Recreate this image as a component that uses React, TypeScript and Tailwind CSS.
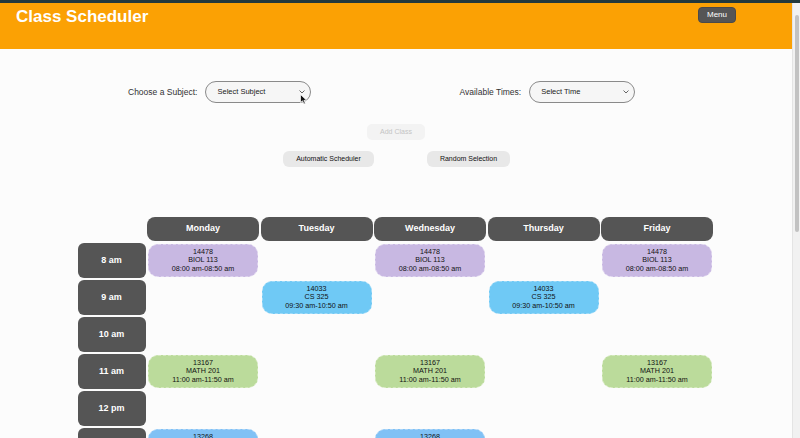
import React from "react";

const times = ["8 am", "9 am", "10 am", "11 am", "12 pm", "1 pm"];
const days = ["Monday", "Tuesday", "Wednesday", "Thursday", "Friday"];

type Block = { crn: string; course: string; time: string; color: string };

const biol: Block = { crn: "14478", course: "BIOL 113", time: "08:00 am-08:50 am", color: "bg-[#c8b8e2] border-[#ddd2ee]" };
const cs: Block = { crn: "14033", course: "CS 325", time: "09:30 am-10:50 am", color: "bg-[#6fc9f5] border-[#9fdaf8]" };
const math: Block = { crn: "13167", course: "MATH 201", time: "11:00 am-11:50 am", color: "bg-[#bbdb9b] border-[#d4e9bd]" };
const late: Block = { crn: "13268", course: "CS 215", time: "01:00 pm-01:50 pm", color: "bg-[#80c1f5] border-[#a9d4f8]" };

// rows x days
const schedule: (Block | null)[][] = [
  [biol, null, biol, null, biol],
  [null, cs, null, cs, null],
  [null, null, null, null, null],
  [math, null, math, null, math],
  [null, null, null, null, null],
  [late, null, late, null, null],
];

function SelectBox({ text }: { text: string }) {
  return (
    <div className="w-[106px] h-[22px] rounded-full border border-[#8a8a8a] bg-[#f6f6f6] flex items-center justify-between pl-[11px] pr-[5px]">
      <span className="text-[7.5px] text-[#222]">{text}</span>
      <svg width="6" height="4" viewBox="0 0 6 4" className="text-[#555]">
        <path d="M0.5 0.5 L3 3 L5.5 0.5" fill="none" stroke="currentColor" strokeWidth="0.9" />
      </svg>
    </div>
  );
}

export default function App() {
  return (
    <div
      className="w-[800px] h-[438px] overflow-hidden bg-[#fcfcfc] flex flex-col"
      style={{ fontFamily: '"Liberation Sans", Arial, sans-serif' }}
    >
      <div className="h-[3px] bg-[#22393d] shrink-0" />
      <div className="flex flex-1 min-h-0">
        <div className="w-[792px] flex flex-col">
          {/* Header */}
          <div className="h-[46px] bg-[#fba104] flex justify-between items-start pl-[16px] pr-[56px] shrink-0">
            <h1 className="text-[17px] font-bold text-white mt-[3px] leading-[22px]">Class Scheduler</h1>
            <button className="mt-[4px] w-[38px] h-[16px] rounded-[4px] bg-[#555] border border-[#4a4a4a] text-white text-[8px] leading-none">
              Menu
            </button>
          </div>

          {/* Pickers */}
          <div className="flex items-center mt-[32px] pl-[128px] relative">
            <div className="flex items-center gap-[8px]">
              <span className="text-[8.5px] text-[#333]">Choose a Subject:</span>
              <SelectBox text="Select Subject" />
            </div>
            <div className="flex items-center gap-[8px] ml-[148px]">
              <span className="text-[8.5px] text-[#333]">Available Times:</span>
              <SelectBox text="Select Time" />
            </div>
            {/* mouse cursor */}
            <svg width="8" height="11" viewBox="0 0 8 11" className="absolute left-[300px] top-[13px]">
              <path d="M0.5 0.5 L0.5 8.5 L2.5 6.8 L4 10 L5.3 9.4 L3.9 6.3 L6.6 6.3 Z" fill="#111" stroke="#fff" strokeWidth="0.7" />
            </svg>
          </div>

          {/* Actions */}
          <div className="flex justify-center mt-[21px]">
            <button disabled className="w-[58px] h-[16px] rounded-[5px] bg-[#f3f3f3] text-[#c4c4c4] text-[7px]">
              Add Class
            </button>
          </div>
          <div className="flex justify-center gap-[53px] mt-[11px] pl-[1px]">
            <button className="w-[91px] h-[16px] rounded-[6px] bg-[#e8e8e8] text-[#111] text-[7px]">
              Automatic Scheduler
            </button>
            <button className="w-[83px] h-[16px] rounded-[6px] bg-[#e8e8e8] text-[#111] text-[7px]">
              Random Selection
            </button>
          </div>

          {/* Calendar */}
          <div className="flex justify-center mt-[50px] pr-[1.5px]">
            <div className="grid grid-cols-[68px_repeat(5,112px)] gap-x-[1.5px] gap-y-[2px] auto-rows-[35px] grid-rows-[24px]">
              <div />
              {days.map((d) => (
                <div
                  key={d}
                  className="bg-[#555] rounded-[8px] flex items-center justify-center text-white text-[9px] font-bold"
                >
                  {d}
                </div>
              ))}
              {times.map((t, r) => (
                <React.Fragment key={t}>
                  <div className="bg-[#555] rounded-[6px] flex items-center justify-center text-white text-[9px] font-bold">
                    {t}
                  </div>
                  {schedule[r].map((b, c) =>
                    b ? (
                      <div key={c} className="p-[1px]">
                        <div
                          className={`h-full rounded-[10px] border border-dashed ${b.color} flex flex-col items-center justify-center text-[7.2px] leading-[8.3px] text-[#111]`}
                        >
                          <span>{b.crn}</span>
                          <span>{b.course}</span>
                          <span>{b.time}</span>
                        </div>
                      </div>
                    ) : (
                      <div key={c} />
                    )
                  )}
                </React.Fragment>
              ))}
            </div>
          </div>
        </div>

        {/* Scrollbar */}
        <div className="w-[8px] bg-[#f1f1f1] border-l border-[#e4e4e4] pt-[12px] flex justify-center">
          <div className="w-[4px] h-[217px] rounded-full bg-[#c2c2c2]" />
        </div>
      </div>
    </div>
  );
}
